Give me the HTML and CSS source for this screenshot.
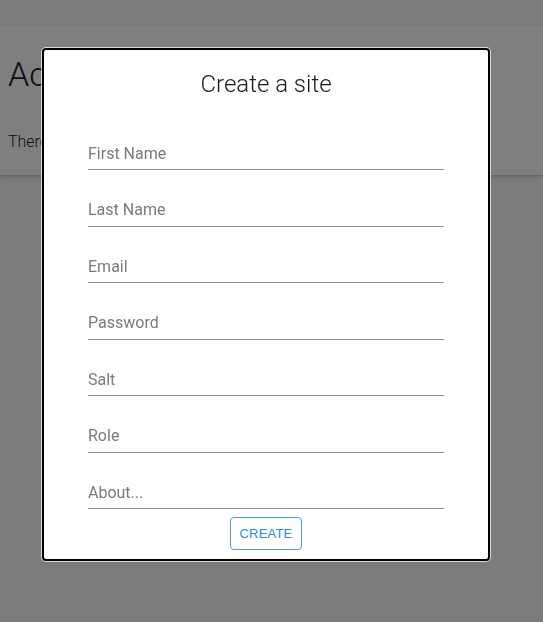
FILE: index.html
```html
<!DOCTYPE html>
<html lang="en">
<head>
<meta charset="utf-8">
<title>Create a site</title>
<link rel="stylesheet" href="styles.css">
</head>
<body>
<div class="page">
  <section class="card">
    <h1 class="card-title">Accounts</h1>
    <p class="card-text">There are no sites yet.</p>
  </section>
</div>
<div class="overlay">
  <div class="modal">
    <h2 class="modal-title">Create a site</h2>
    <form class="form">
      <input class="field" type="text" placeholder="First Name">
      <input class="field" type="text" placeholder="Last Name">
      <input class="field" type="email" placeholder="Email">
      <input class="field" type="password" placeholder="Password">
      <input class="field" type="text" placeholder="Salt">
      <input class="field" type="text" placeholder="Role">
      <input class="field" type="text" placeholder="About...">
      <button class="btn" type="button">CREATE</button>
    </form>
  </div>
</div>
</body>
</html>
```
FILE: styles.css
```css
html, body {
  margin: 0;
  padding: 0;
}
body {
  background: #f8f8f8;
  font-family: Roboto, "Liberation Sans", sans-serif;
  height: 622px;
  overflow: hidden;
}
.page {
  padding-top: 26px;
}
.card {
  background: #fff;
  padding: 0 8px;
  height: 149px;
  box-sizing: border-box;
  overflow: hidden;
  box-shadow: 0 2px 4px rgba(0,0,0,0.15), 0 1px 2px rgba(0,0,0,0.1);
}
.card-title {
  margin: 27px 0 0;
  font-size: 34px;
  line-height: 42px;
  font-weight: 300;
  color: #212121;
}
.card-text {
  margin: 35px 0 0;
  font-size: 16px;
  line-height: 24px;
  font-weight: 300;
  color: #212121;
}
.overlay {
  position: fixed;
  inset: 0;
  background: rgba(0,0,0,0.5);
  padding: 48px 0 0 42px;
}
.modal {
  width: 448px;
  box-sizing: border-box;
  background: #fff;
  border: 2px solid #000;
  border-radius: 4px;
  box-shadow: 0 0 0 1px rgba(255,255,255,0.7);
  padding: 18px 44px 9px;
  text-align: center;
}
.modal-title {
  margin: 0;
  font-size: 24px;
  line-height: 32px;
  font-weight: 300;
  color: #1a1a1a;
}
.form {
  display: flex;
  flex-direction: column;
  align-items: center;
  padding-top: 13.5px;
}
.field {
  display: block;
  width: 100%;
  height: 33px;
  box-sizing: border-box;
  margin: 23.5px 0 0;
  padding: 0;
  border: none;
  border-bottom: 1px solid #939393;
  outline: none;
  background: transparent;
  font-family: Roboto, "Liberation Sans", sans-serif;
  font-size: 16px;
  color: #333;
}
.field::placeholder {
  color: #7a7a7a;
  opacity: 1;
}
.btn {
  margin-top: 8px;
  height: 33px;
  width: 72px;
  padding: 0;
  background: #fff;
  border: 1px solid #4a9be8;
  border-radius: 4px;
  color: #2a8ae6;
  font-family: "Liberation Sans", Arial, sans-serif;
  font-size: 13px;
  letter-spacing: 0.2px;
}
```
